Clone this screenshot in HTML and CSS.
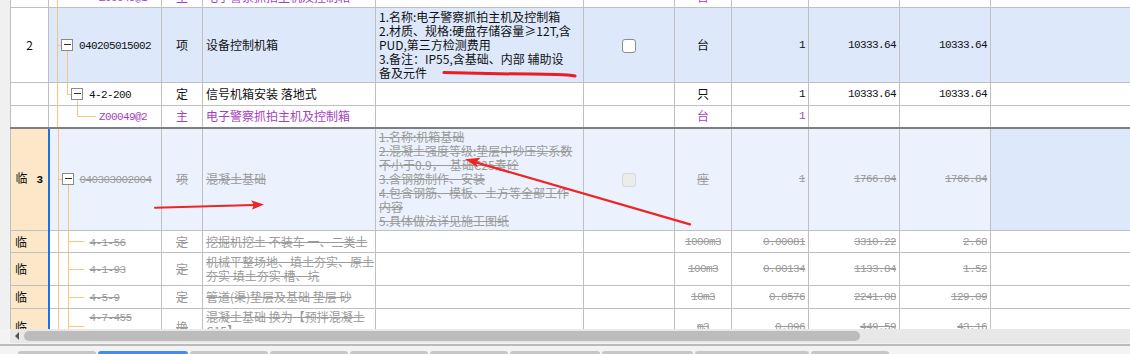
FILE: index.html
```html
<!DOCTYPE html>
<html lang="zh-CN">
<head>
    <meta charset="UTF-8">
    <title>分部分项工程量清单</title>
    <link rel="stylesheet" href="styles.css">
</head>
<body>
    <div class="main">
        <div class="side"></div>
        <div class="grid">
            <table class="sheet">
                <colgroup>
                    <col class="w-idx"><col class="w-code"><col class="w-type"><col class="w-name">
                    <col class="w-desc"><col class="w-chk"><col class="w-unit"><col class="w-qty">
                    <col class="w-price"><col class="w-sum"><col class="w-rest">
                </colgroup>
                <tbody>
                    <!-- 上一条（已滚出视图） -->
                    <tr class="h22 pu">
                        <td class="idx"></td>
                        <td class="code t-pre"><span class="n">Z00049@1</span></td>
                        <td class="c">主</td>
                        <td>电子警察抓拍主机及控制箱</td>
                        <td></td><td></td>
                        <td class="c">台</td>
                        <td class="r n">1</td>
                        <td></td><td></td><td></td>
                    </tr>

                    <tr class="h75 sel">
                        <td class="idx">2</td>
                        <td class="code t-l1"><span class="box box-l1"></span><span class="n">040205015002</span></td>
                        <td class="c">项</td>
                        <td>设备控制机箱</td>
                        <td class="desc">1.名称:电子警察抓拍主机及控制箱<br>2.材质、规格:硬盘存储容量≥12T,含<br>PUD,第三方检测费用<br>3.备注：IP55,含基础、内部 辅助设<br>备及元件</td>
                        <td class="c"><span class="chk"></span></td>
                        <td class="c">台</td>
                        <td class="r n">1</td>
                        <td class="r n">10333.64</td>
                        <td class="r n">10333.64</td>
                        <td></td>
                    </tr>

                    <tr class="h23">
                        <td class="idx"></td>
                        <td class="code t-l2open"><span class="box box-l2"></span><span class="n">4-2-200</span></td>
                        <td class="c">定</td>
                        <td>信号机箱安装 落地式</td>
                        <td></td><td></td>
                        <td class="c">只</td>
                        <td class="r n">1</td>
                        <td class="r n">10333.64</td>
                        <td class="r n">10333.64</td>
                        <td></td>
                    </tr>

                    <tr class="h22 pu">
                        <td class="idx"></td>
                        <td class="code t-l3last"><span class="n">Z00049@2</span></td>
                        <td class="c">主</td>
                        <td>电子警察抓拍主机及控制箱</td>
                        <td></td><td></td>
                        <td class="c">台</td>
                        <td class="r n">1</td>
                        <td></td><td></td><td></td>
                    </tr>

                    <!-- 临时删除的清单项 -->
                    <tr class="h103 tmp gr">
                        <td class="idx">临<b class="no">3</b></td>
                        <td class="code t-l1"><span class="box box-l1"></span><span class="n">040303002004</span></td>
                        <td class="c">项</td>
                        <td>混凝土基础</td>
                        <td class="desc">1.名称:机箱基础<br>2.混凝土强度等级:垫层中砂压实系数<br>不小于0.9，　基础C25素砼<br>3.含钢筋制作、安装<br>4.包含钢筋、模板、土方等全部工作<br>内容<br>5.具体做法详见施工图纸</td>
                        <td class="c"><span class="chk off"></span></td>
                        <td class="c">座</td>
                        <td class="r n">1</td>
                        <td class="r n">1766.84</td>
                        <td class="r n">1766.84</td>
                        <td class="last"></td>
                    </tr>

                    <tr class="h22 sub gr">
                        <td class="idx">临</td>
                        <td class="code t-l2"><span class="n">4-1-56</span></td>
                        <td class="c">定</td>
                        <td>挖掘机挖土 不装车 一、二类土</td>
                        <td></td><td></td>
                        <td class="c n">1000m3</td>
                        <td class="r n">0.00081</td>
                        <td class="r n">3310.22</td>
                        <td class="r n">2.68</td>
                        <td></td>
                    </tr>

                    <tr class="h33 sub gr">
                        <td class="idx">临</td>
                        <td class="code t-l2"><span class="n">4-1-93</span></td>
                        <td class="c">定</td>
                        <td>机械平整场地、填土夯实、原土<br>夯实 填土夯实 槽、坑</td>
                        <td></td><td></td>
                        <td class="c n">100m3</td>
                        <td class="r n">0.00134</td>
                        <td class="r n">1133.84</td>
                        <td class="r n">1.52</td>
                        <td></td>
                    </tr>

                    <tr class="h23 sub gr">
                        <td class="idx">临</td>
                        <td class="code t-l2"><span class="n">4-5-9</span></td>
                        <td class="c">定</td>
                        <td>管道(渠)垫层及基础 垫层 砂</td>
                        <td></td><td></td>
                        <td class="c n">10m3</td>
                        <td class="r n">0.0576</td>
                        <td class="r n">2241.08</td>
                        <td class="r n">129.09</td>
                        <td></td>
                    </tr>

                    <tr class="h36 sub gr">
                        <td class="idx">临</td>
                        <td class="code t-l2 top"><span class="n">4-7-455</span></td>
                        <td class="c">换</td>
                        <td class="top">混凝土基础 换为【预拌混凝土<br>C15】</td>
                        <td></td><td></td>
                        <td class="c n">m3</td>
                        <td class="r n">0.096</td>
                        <td class="r n">449.59</td>
                        <td class="r n">43.16</td>
                        <td></td>
                    </tr>
                </tbody>
            </table>
        </div>
    </div>

    <div class="hscroll">
        <div class="hs-side"></div>
        <div class="hs-track">
            <span class="hs-arrow"></span>
            <span class="hs-thumb"></span>
        </div>
    </div>
    <div class="split"></div>

    <div class="tabs">
        <span class="tab w78"></span>
        <span class="tab w90 on"></span>
        <span class="tab w78"></span>
        <span class="tab w78"></span>
        <span class="tab w78"></span>
        <span class="tab w78"></span>
        <span class="tab w90"></span>
        <span class="tab w91"></span>
        <span class="tab w114"></span>
        <span class="tab w78"></span>
    </div>

    <!-- 截图上的红色批注 -->
    <svg class="marks" width="1130" height="354" viewBox="0 0 1130 354">
        <path d="M444 72.6 Q500 74 556 74.4 Q570 74.8 575 76" fill="none" stroke="#ec1c1f" stroke-width="3" stroke-linecap="round"/>
        <path d="M155 207.8 L254 205" fill="none" stroke="#ef2424" stroke-width="2" stroke-linecap="round"/>
        <path d="M264 204.6 L251 200.3 L254 204.8 L252 209.6 Z" fill="#ef2424"/>
        <path d="M690 224.3 L474 161.8" fill="none" stroke="#ef2424" stroke-width="2.3" stroke-linecap="round"/>
        <path d="M465 159.3 L480.5 157.8 L476 162.5 L477.8 167.6 Z" fill="#ef2424"/>
    </svg>
</body>
</html>
```

FILE: styles.css
```css
/* Estilos base */
* {
    margin: 0;
    padding: 0;
    box-sizing: border-box;
}

body {
    width: 1130px;
    height: 354px;
    overflow: hidden;
    position: relative;
    background: #f3f3f3;
    font-family: "Noto Sans CJK SC", sans-serif;
    font-size: 12px;
    color: #111;
}

/* Tabla */
.main {
    display: flex;
    height: 329px;
}

.side {
    width: 10px;
    flex: none;
    background: #f0f0f0;
}

.grid {
    flex: 1;
    overflow: hidden;
    background: #fff;
}

.sheet {
    border-collapse: collapse;
    table-layout: fixed;
    width: 1180px;
    margin-top: -15px;
}

.w-idx { width: 38px; }
.w-code { width: 113px; }
.w-type { width: 41px; }
.w-name { width: 173px; }
.w-desc { width: 208px; }
.w-chk { width: 91px; }
.w-unit { width: 57px; }
.w-qty { width: 77px; }
.w-price { width: 91px; }
.w-sum { width: 91px; }
.w-rest { width: 200px; }

.sheet td {
    border: 1px solid #c0c0c0;
    padding: 0 3px;
    line-height: 14px;
    white-space: nowrap;
    overflow: hidden;
    vertical-align: middle;
    background-color: #fff;
}

.h22 { height: 22px; }
.h23 { height: 23px; }
.h33 { height: 33px; }
.h36 { height: 36px; }
.h75 { height: 75px; }
.h103 { height: 103px; }

.c { text-align: center; }
.r { text-align: right; }

.sheet td.top {
    vertical-align: top;
    padding-top: 1px;
}

.n {
    font-family: "Liberation Mono", monospace;
    font-size: 11px;
    letter-spacing: -0.6px;
}

.idx {
    text-align: center;
    color: #111;
}

.no {
    margin-left: 9px;
    font-family: "Liberation Mono", monospace;
    font-weight: bold;
    font-size: 11px;
}

.desc {
    padding-left: 3px;
}

/* Colores de filas */
.pu td { color: #a43fc0; }
.pu td.idx { color: #111; }

.gr td {
    color: #9a9a9a;
    text-decoration: line-through;
}
.gr td.idx {
    color: #111;
    text-decoration: none;
    background-color: #fde7c9;
}
.gr td.code { text-decoration: none; }
.gr td.code .n { text-decoration: line-through; }

.sel td { background-color: #dde8fb; }
.sel td.idx { background-color: #fff; }

.tmp td {
    background-color: #ebf2fd;
    border-top: 2px solid #7f7f7f;
}
.tmp td.last { background-color: #dde8fb; }

.sub td.idx {
    text-align: left;
    padding-left: 4px;
}

.tmp td.code,
.sub td.code {
    border-left: 2px solid #1a6ef2;
}

/* Lineas del arbol */
.sheet td.code {
    padding: 0;
    background-repeat: no-repeat;
    --ln: linear-gradient(#f8c57d, #f8c57d);
}

.t-pre {
    background-image: var(--ln);
    background-position: 8px 0;
    background-size: 1px 100%;
}

.t-l1 {
    background-image: var(--ln), var(--ln), var(--ln);
    background-position: 8px 0, 8px 50%, 18px 100%;
    background-size: 1px 100%, 4px 1px, 1px 50%;
}

.t-l2open {
    background-image: var(--ln), var(--ln), var(--ln), var(--ln);
    background-position: 8px 0, 18px 0, 18px 50%, 28px 100%;
    background-size: 1px 100%, 1px 50%, 4px 1px, 1px 50%;
}

.t-l3last {
    background-image: var(--ln), var(--ln), var(--ln);
    background-position: 8px 0, 28px 0, 28px 50%;
    background-size: 1px 100%, 1px 50%, 19px 1px;
}

.sheet td.t-l2 {
    background-image: var(--ln), var(--ln), var(--ln);
    background-position: 8px 0, 18px 0, 18px 50%;
    background-size: 1px 100%, 1px 100%, 16px 1px;
    padding-left: 40px;
}

.t-pre .n,
.t-l3last .n {
    margin-left: 50px;
}

.box {
    display: inline-block;
    width: 12px;
    height: 12px;
    border: 1px solid #8a8a8a;
    background: #fff linear-gradient(#333, #333) no-repeat 2px 4px / 7px 1px;
    vertical-align: -2px;
    margin-right: 6px;
}

.box-l1 { margin-left: 12px; }
.box-l2 { margin-left: 22px; }

.chk {
    display: inline-block;
    width: 14px;
    height: 14px;
    border: 1px solid #8c8c8c;
    border-radius: 3px;
    background: #fff;
    vertical-align: middle;
}

.chk.off {
    border-color: #d6d6d6;
    background: #ececec;
}

/* Barra de desplazamiento */
.hscroll {
    display: flex;
    height: 14px;
}

.hs-side {
    width: 10px;
    background: #f3f3f3;
}

.hs-track {
    flex: 1;
    display: flex;
    align-items: center;
    background: #e8e8e8;
    padding-left: 5px;
}

.hs-arrow {
    width: 0;
    height: 0;
    border-top: 4px solid transparent;
    border-bottom: 4px solid transparent;
    border-right: 4px solid #555;
}

.hs-thumb {
    width: 836px;
    height: 10px;
    margin-left: 5px;
    border-radius: 5px;
    background: #bcbcbc;
}

.split {
    height: 3px;
    border-top: 1px solid #f3f3f3;
    background: #bbb;
}

/* Pestanas */
.tabs {
    display: flex;
    gap: 2px;
    padding: 5px 0 0 18px;
}

.tab {
    height: 8px;
    border-radius: 3px 3px 0 0;
    background: #c6c6c6;
}

.tab.on { background: #3e8ef1; }

.w78 { width: 78px; }
.w90 { width: 90px; }
.w91 { width: 91px; }
.w114 { width: 114px; }

/* Anotaciones */
.marks {
    position: absolute;
    top: 0;
    left: 0;
    pointer-events: none;
}
```
